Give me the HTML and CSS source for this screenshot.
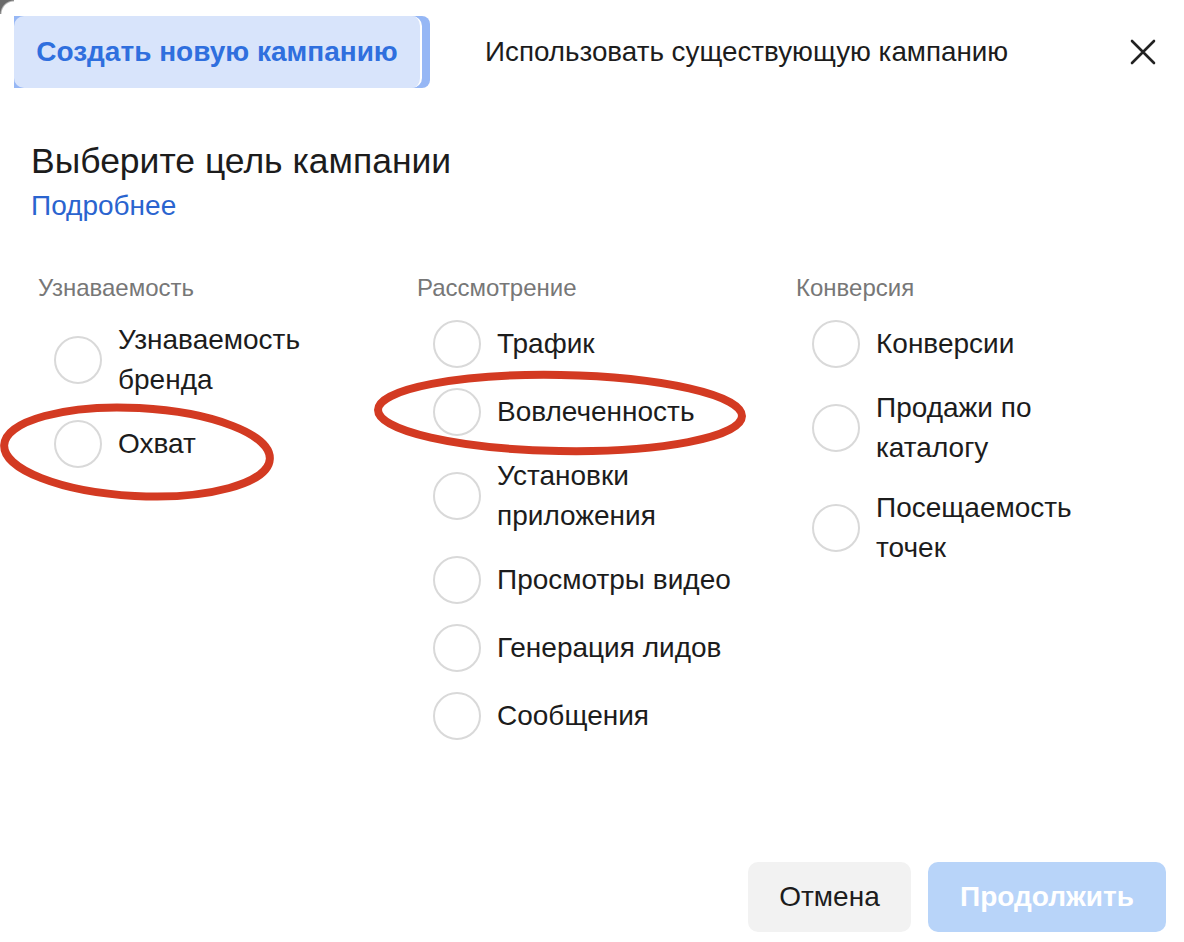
FILE: index.html
```html
<!DOCTYPE html>
<html lang="ru">
<head>
<meta charset="utf-8">
<title>Цель кампании</title>
<link rel="stylesheet" href="styles.css">
</head>
<body>
<div class="corner"></div>
<div class="dialog">
  <div class="header">
    <div class="tab-wrap"><div class="tab-active">Создать новую кампанию</div></div>
    <div class="tab-other">Использовать существующую кампанию</div>
    <div class="close">
      <svg width="26" height="26" viewBox="0 0 26 26"><path d="M2 2 L24 24 M24 2 L2 24" stroke="#222" stroke-width="2.6" stroke-linecap="round"/></svg>
    </div>
  </div>
  <h1 class="title">Выберите цель кампании</h1>
  <a class="more">Подробнее</a>
  <div class="columns">
    <div class="col">
      <div class="col-head">Узнаваемость</div>
      <div class="items">
        <div class="item"><span class="radio"></span><span class="label">Узнаваемость бренда</span></div>
        <div class="item"><span class="radio"></span><span class="label">Охват</span></div>
      </div>
    </div>
    <div class="col">
      <div class="col-head">Рассмотрение</div>
      <div class="items">
        <div class="item"><span class="radio"></span><span class="label">Трафик</span></div>
        <div class="item"><span class="radio"></span><span class="label">Вовлеченность</span></div>
        <div class="item"><span class="radio"></span><span class="label">Установки приложения</span></div>
        <div class="item"><span class="radio"></span><span class="label">Просмотры видео</span></div>
        <div class="item"><span class="radio"></span><span class="label">Генерация лидов</span></div>
        <div class="item"><span class="radio"></span><span class="label">Сообщения</span></div>
      </div>
    </div>
    <div class="col">
      <div class="col-head">Конверсия</div>
      <div class="items">
        <div class="item"><span class="radio"></span><span class="label">Конверсии</span></div>
        <div class="item"><span class="radio"></span><span class="label">Продажи по каталогу</span></div>
        <div class="item"><span class="radio"></span><span class="label">Посещаемость точек</span></div>
      </div>
    </div>
  </div>
  <div class="footer">
    <button class="btn btn-cancel">Отмена</button>
    <button class="btn btn-next">Продолжить</button>
  </div>
</div>
<svg class="marks" width="1184" height="942" viewBox="0 0 1184 942">
  <ellipse cx="137" cy="452" rx="133" ry="44" transform="rotate(3 137 452)" fill="none" stroke="#d33a22" stroke-width="8"/>
  <ellipse cx="560" cy="413" rx="182" ry="38" transform="rotate(1 560 413)" fill="none" stroke="#d33a22" stroke-width="8"/>
</svg>
</body>
</html>
```

FILE: styles.css
```css
* { box-sizing: border-box; }
html, body { margin: 0; padding: 0; background: #fff; }
body {
  width: 1184px;
  height: 942px;
  overflow: hidden;
  position: relative;
  font-family: "Liberation Sans", Arial, sans-serif;
  color: #1c1c1c;
}
.corner {
  position: absolute;
  left: 0; top: 0;
  width: 14px; height: 14px;
  background: radial-gradient(circle at 14px 14px, transparent 12px, #6b6b6b 14px);
}
.dialog {
  display: flex;
  flex-direction: column;
  height: 942px;
}
.header {
  display: flex;
  align-items: center;
  padding: 16px 0 0 14px;
  height: 88px;
}
.tab-wrap {
  background: #96b7f5;
  padding-right: 8px;
  border-radius: 0 8px 8px 0;
}
.tab-active {
  width: 408px;
  height: 72px;
  background: #d8e4fb;
  border-right: 2px solid #fff;
  border-radius: 10px;
  color: #2f6fde;
  font-weight: bold;
  font-size: 28px;
  display: flex;
  align-items: center;
  justify-content: center;
}
.tab-other {
  margin-left: 55px;
  font-size: 27.8px;
  color: #1c1c1c;
}
.close {
  margin-left: auto;
  margin-right: 28px;
  display: flex;
}
.title {
  margin: 51px 0 0 31px;
  font-size: 35.5px;
  font-weight: normal;
  line-height: 44px;
  color: #1c1c1c;
}
.more {
  margin: 6px 0 0 31px;
  font-size: 28px;
  line-height: 34px;
  color: #2a64cf;
}
.columns {
  display: grid;
  grid-template-columns: 379px 379px 379px;
  margin: 50px 0 0 38px;
}
.col-head {
  font-size: 24px;
  line-height: 30px;
  color: #777;
}
.items {
  display: flex;
  flex-direction: column;
  gap: 20px;
  margin-top: 17px;
  padding-left: 16px;
}
.item {
  display: flex;
  align-items: center;
  gap: 16px;
  min-height: 48px;
}
.radio {
  flex: none;
  width: 48px;
  height: 48px;
  border: 2px solid #d9d9d9;
  border-radius: 50%;
}
.label {
  font-size: 28px;
  line-height: 40px;
  max-width: 250px;
  color: #1c1c1c;
}
.footer {
  margin-top: auto;
  display: flex;
  justify-content: flex-end;
  gap: 17px;
  padding: 0 18px 10px 0;
}
.btn {
  border: none;
  height: 70px;
  border-radius: 10px;
  font-family: inherit;
  font-size: 28px;
}
.btn-cancel {
  width: 163px;
  background: #f2f2f2;
  color: #1c1c1c;
}
.btn-next {
  width: 238px;
  background: #b8d4f9;
  color: #fff;
  font-weight: bold;
}
.marks {
  position: absolute;
  left: 0;
  top: 0;
  pointer-events: none;
}
```
